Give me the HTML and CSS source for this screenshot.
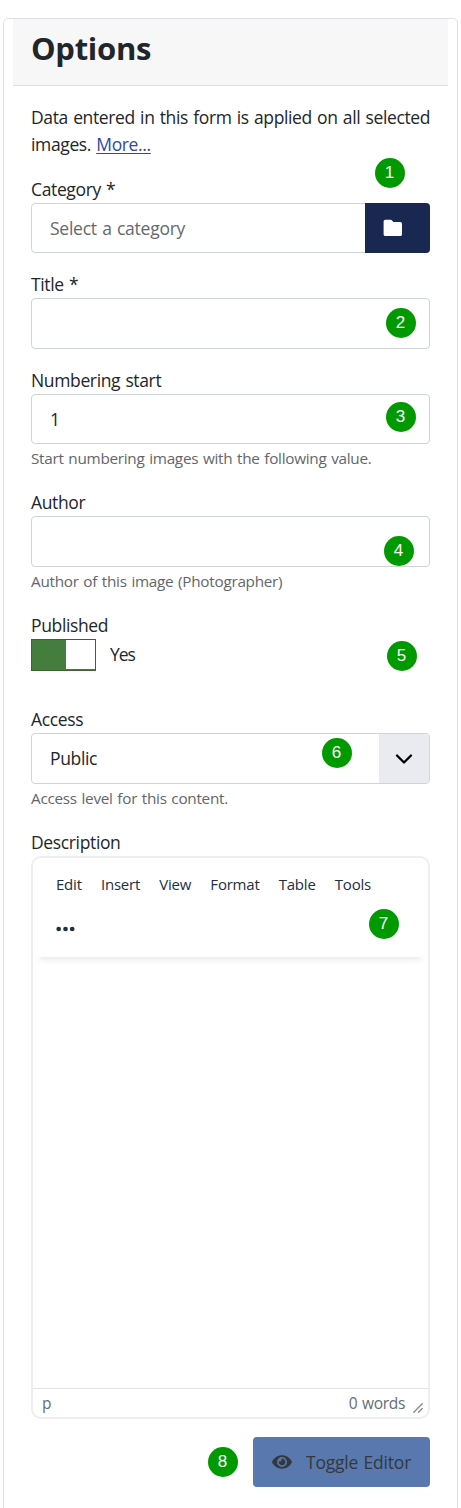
FILE: index.html
```html
<!DOCTYPE html>
<html lang="en">
<head>
<meta charset="utf-8">
<title>Options</title>
<link rel="stylesheet" href="styles.css">
</head>
<body>
<main class="card">
  <header class="card-header"><h1 class="card-title">Options</h1></header>
  <form class="card-body">
    <p class="intro">Data entered in this form is applied on all selected<br>images. <a class="more" href="#">More...</a></p>

    <div class="field">
      <label class="label">Category *</label>
      <div class="control control-group">
        <span class="placeholder">Select a category</span>
        <button class="folder-button" type="button" aria-label="Select">
          <svg width="20" height="18" viewBox="0 0 20 18"><path fill="#fff" d="M2.500.8h5c.8 0 1.300.3 1.800.9L10.400 3h6.600c1.300 0 2 .8 2 2v10.200c0 1.200-.8 1.900-2 1.900H2.500c-1.200 0-1.900-.8-1.900-1.900V2.800c0-1.200.7-2 1.900-2z"/></svg>
        </button>
      </div>
      <span class="marker marker-1">1</span>
    </div>

    <div class="field">
      <label class="label">Title *</label>
      <div class="control tall"></div>
      <span class="marker marker-2">2</span>
    </div>

    <div class="field">
      <label class="label">Numbering start</label>
      <div class="control">1</div>
      <small class="help">Start numbering images with the following value.</small>
      <span class="marker marker-3">3</span>
    </div>

    <div class="field">
      <label class="label">Author</label>
      <div class="control tall"></div>
      <small class="help">Author of this image (Photographer)</small>
      <span class="marker marker-4">4</span>
    </div>

    <div class="field field-published">
      <label class="label">Published</label>
      <div class="switch-row"><span class="switch"><span class="switch-knob"></span></span><span class="yes">Yes</span></div>
      <span class="marker marker-5">5</span>
    </div>

    <div class="field">
      <label class="label">Access</label>
      <div class="control tall control-group">
        <span>Public</span>
        <span class="select-arrow"><svg width="18" height="12" viewBox="0 0 18 12"><path d="M2 2.500l7 7 7-7" fill="none" stroke="#000" stroke-width="2.300" stroke-linecap="round" stroke-linejoin="round"/></svg></span>
      </div>
      <small class="help">Access level for this content.</small>
      <span class="marker marker-6">6</span>
    </div>

    <div class="field">
      <label class="label">Description</label>
      <div class="editor">
        <div class="editor-header">
          <nav class="menu">
            <span>Edit</span><span>Insert</span><span>View</span><span>Format</span><span>Table</span><span>Tools</span>
          </nav>
          <svg class="dots" width="20" height="6" viewBox="0 0 20 6" fill="#222f3e"><circle cx="2.700" cy="3" r="2.350"/><circle cx="9.500" cy="3" r="2.350"/><circle cx="16.200" cy="3" r="2.350"/></svg>
        </div>
        <div class="editor-content"></div>
        <div class="statusbar">
          <span>p</span><span class="words">0 words</span>
          <svg class="grip" width="10" height="10" viewBox="0 0 10 10"><path d="M.8 9.200L9.200.8M5.500 9.200L9.200 5.500" stroke="#868c93" stroke-width="1.400" stroke-linecap="round"/></svg>
        </div>
      </div>
      <span class="marker marker-7">7</span>
    </div>

    <div class="actions">
      <span class="marker-static">8</span>
      <button class="toggle" type="button">
        <svg width="20" height="18" viewBox="0 0 576 512" preserveAspectRatio="none"><path fill="#34383d" d="M572.500 241.400C518.300 135.600 410.900 64 288 64S57.700 135.600 3.500 241.400a32.400 32.400 0 0 0 0 29.200C57.700 376.400 165.100 448 288 448s230.300-71.600 284.500-177.400a32.400 32.400 0 0 0 0-29.200zM288 400a144 144 0 1 1 144-144 143.900 143.900 0 0 1-144 144zm0-240a95.300 95.300 0 0 0-25.300 3.800 47.900 47.900 0 0 1-66.900 66.900A95.800 95.800 0 1 0 288 160z"/></svg>
        <span>Toggle Editor</span>
      </button>
    </div>
  </form>
</main>
</body>
</html>
```
FILE: styles.css
```css
* { box-sizing: border-box; }
html { overflow: hidden; background: #fff; }
body {
  height: 1508px;
  margin: 0;
  padding: 18px 3px 0;
  overflow: hidden;
  color: #22262a;
  font: 17.5px/27px "Open Sans", "Noto Sans", sans-serif;
  letter-spacing: -0.36px;
  word-spacing: 1px;
}
.card {
  width: 455px;
  height: 1510px;
  padding: 0 9px;
  border: 1px solid #dfe0e5;
  border-radius: 5px;
}
.card-header {
  height: 67px;
  padding: 11px 18px;
  background: #f7f7f7;
  border-bottom: 1px solid #dfe0e4;
}
.card-title { margin: 0; font-size: 31px; line-height: 36px; letter-spacing: -0.3px; }
.card-body { padding: 18px 18px 0; }
.intro { margin: 0 0 18px; white-space: nowrap; }
.more { color: #30499b; text-underline-offset: 2px; text-decoration-thickness: 1px; }
.field { position: relative; margin-bottom: 18px; white-space: nowrap; }
.field-published { margin-bottom: 35px; }
.label { display: block; width: max-content; height: 27px; }
.control {
  height: 50px;
  padding: 11px 18px;
  border: 1px solid #ced4da;
  border-radius: 4px;
}
.tall { height: 51px; }
.control-group { display: flex; justify-content: space-between; padding-right: 0; }
.placeholder { color: #65696d; letter-spacing: -0.24px; }
.folder-button {
  width: 65px;
  height: 50px;
  margin: -12px -1px 0 0;
  padding: 2px 0 0 18px;
  border: 0;
  border-radius: 0 4px 4px 0;
  background: #182850;
  text-align: left;
}
.select-arrow {
  display: grid;
  place-items: center;
  width: 50px;
  height: 49px;
  margin-top: -11px;
  border-radius: 0 3px 3px 0;
  background: #eaebf0;
}
.help {
  display: block;
  width: max-content;
  height: 27px;
  padding-top: 1px;
  color: #62666b;
  font-size: 15.3px;
  letter-spacing: -0.28px;
}
.switch-row { display: flex; align-items: center; gap: 14px; height: 32px; }
.yes { margin-top: -2px; letter-spacing: -1.1px; }
.switch {
  display: flex;
  justify-content: flex-end;
  width: 65px;
  height: 32px;
  padding-bottom: 1px;
  border: 1px solid #3b6430;
  background: #457d3f;
}
.switch-knob { width: 29px; background: #fff; }
.editor { display: flex; flex-direction: column; height: 563px; border: 2px solid #eee; border-radius: 10px; }
.editor-header {
  height: 99px;
  margin: 0 2px;
  padding: 12px 21px;
  border-radius: 8px 8px 0 0;
  background: #fff;
  box-shadow: 0 7px 6px -5px rgba(34, 47, 62, .12);
}
.menu { display: flex; gap: 19.2px; height: 28px; color: #222f3e; font-size: 15px; line-height: 28px; letter-spacing: -0.22px; }
.dots { display: block; margin-top: 28px; }
.editor-content { flex: 1; }
.statusbar {
  display: flex;
  height: 29px;
  padding: 0 5px 0 9px;
  border-top: 1px solid #e3e3e3;
  color: #646d77;
  font-size: 15.5px;
  line-height: 29px;
  letter-spacing: -0.3px;
}
.words { margin-left: auto; }
.grip { margin: 14px 0 0 8px; }
.actions { display: flex; justify-content: flex-end; align-items: center; gap: 15px; margin-top: 18px; }
.toggle {
  display: flex;
  align-items: center;
  width: 177px;
  height: 50px;
  padding: 0 0 0 19px;
  gap: 14px;
  border: 0;
  border-radius: 4px;
  background: #5878ae;
  color: #34383d;
  font: inherit;
  letter-spacing: -0.2px;
  word-spacing: inherit;
}
.marker, .marker-static {
  width: 30px;
  height: 30px;
  padding-right: 1px;
  border-radius: 50%;
  background: #090;
  color: #fff;
  font: 17px/29px "Liberation Sans", Arial, sans-serif;
  letter-spacing: 0;
  text-align: center;
}
.marker { position: absolute; }
.marker-1 { left: 344px; top: -18px; }
.marker-2 { left: 355px; top: 37px; }
.marker-3 { left: 355px; top: 35px; }
.marker-4 { left: 353px; top: 47px; }
.marker-5 { left: 356px; top: 29px; }
.marker-6 { left: 291px; top: 32px; }
.marker-7 { left: 338px; top: 80px; }
```
